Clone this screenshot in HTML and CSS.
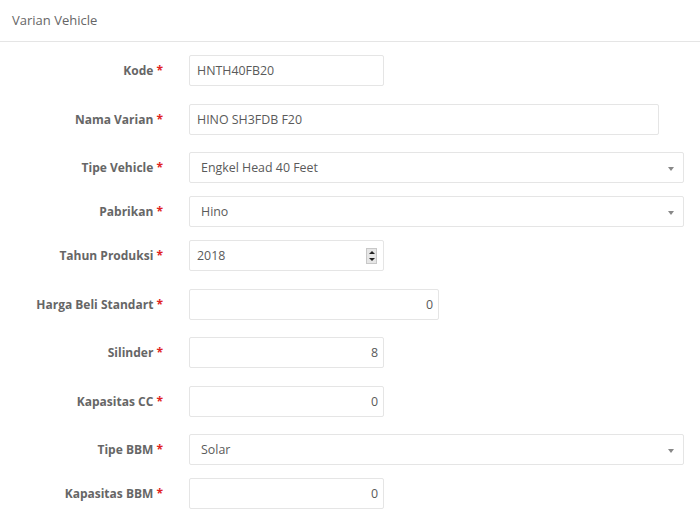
FILE: index.html
```html
<!DOCTYPE html>
<html lang="id">
<head>
<meta charset="utf-8">
<title>Varian Vehicle</title>
<link rel="stylesheet" href="styles.css">
</head>
<body>
<div class="portlet">
  <div class="portlet-title">Varian Vehicle</div>
  <form class="form">
    <div class="row row-input">
      <label class="lbl">Kode <span class="req">*</span></label>
      <div class="ctl w-sm">HNTH40FB20</div>
    </div>
    <div class="row row-input">
      <label class="lbl">Nama Varian <span class="req">*</span></label>
      <div class="ctl w-md">HINO SH3FDB F20</div>
    </div>
    <div class="row row-select">
      <label class="lbl">Tipe Vehicle <span class="req">*</span></label>
      <div class="ctl sel w-lg"><span>Engkel Head 40 Feet</span><i class="caret"></i></div>
    </div>
    <div class="row row-select">
      <label class="lbl">Pabrikan <span class="req">*</span></label>
      <div class="ctl sel w-lg"><span>Hino</span><i class="caret"></i></div>
    </div>
    <div class="row row-input">
      <label class="lbl">Tahun Produksi <span class="req">*</span></label>
      <div class="ctl spin w-sm"><span>2018</span><span class="spinner"><i class="up"></i><i class="down"></i></span></div>
    </div>
    <div class="row row-input">
      <label class="lbl">Harga Beli Standart <span class="req">*</span></label>
      <div class="ctl num w-mid">0</div>
    </div>
    <div class="row row-input">
      <label class="lbl">Silinder <span class="req">*</span></label>
      <div class="ctl num w-sm">8</div>
    </div>
    <div class="row row-input">
      <label class="lbl">Kapasitas CC <span class="req">*</span></label>
      <div class="ctl num w-sm">0</div>
    </div>
    <div class="row row-select">
      <label class="lbl">Tipe BBM <span class="req">*</span></label>
      <div class="ctl sel w-lg"><span>Solar</span><i class="caret"></i></div>
    </div>
    <div class="row row-input">
      <label class="lbl">Kapasitas BBM <span class="req">*</span></label>
      <div class="ctl num w-sm">0</div>
    </div>
  </form>
</div>
</body>
</html>
```
FILE: styles.css
```css
html, body {
  margin: 0;
  padding: 0;
  background: #fff;
}
body {
  font-family: "Open Sans", "Liberation Sans", sans-serif;
  color: #555;
}
.portlet-title {
  height: 42px;
  box-sizing: border-box;
  padding: 11px 12px 0;
  font-size: 13px;
  color: #666;
  border-bottom: 1px solid #e5e5e5;
}
.form {
  padding-top: 13px;
}
.row {
  display: flex;
  align-items: center;
}
.row-input { margin-bottom: 17.5px; }
.row-select { margin-bottom: 13px; }
.lbl {
  width: 163px;
  text-align: right;
  font-size: 12px;
  font-weight: 700;
  color: #666;
  margin-right: 26px;
}
.req {
  color: #e02222;
  font-weight: 700;
}
.ctl {
  box-sizing: border-box;
  height: 31px;
  border: 1px solid #e5e5e5;
  border-radius: 2px;
  display: flex;
  align-items: center;
  padding: 0 7px;
  font-size: 12.4px;
  color: #5a5a5a;
}
.w-sm { width: 195px; }
.w-md { width: 470px; }
.w-mid { width: 250px; }
.w-lg { width: 495px; }
.sel {
  padding-left: 11px;
  justify-content: space-between;
  padding-right: 9px;
}
.caret {
  width: 0;
  height: 0;
  margin-top: 2px;
  border-left: 3px solid transparent;
  border-right: 3px solid transparent;
  border-top: 4px solid #888;
}
.num {
  justify-content: flex-end;
  padding-right: 5px;
}
.spin {
  justify-content: space-between;
  padding-right: 6px;
}
.spinner {
  width: 11px;
  height: 16px;
  box-sizing: border-box;
  border: 1px solid #c8c8c8;
  background: #e6e6e6;
  display: flex;
  flex-direction: column;
  align-items: center;
  justify-content: space-around;
}
.spinner .up, .spinner .down {
  width: 0;
  height: 0;
  border-left: 3px solid transparent;
  border-right: 3px solid transparent;
}
.spinner .up { border-bottom: 3px solid #222; }
.spinner .down { border-top: 3px solid #222; }
```
